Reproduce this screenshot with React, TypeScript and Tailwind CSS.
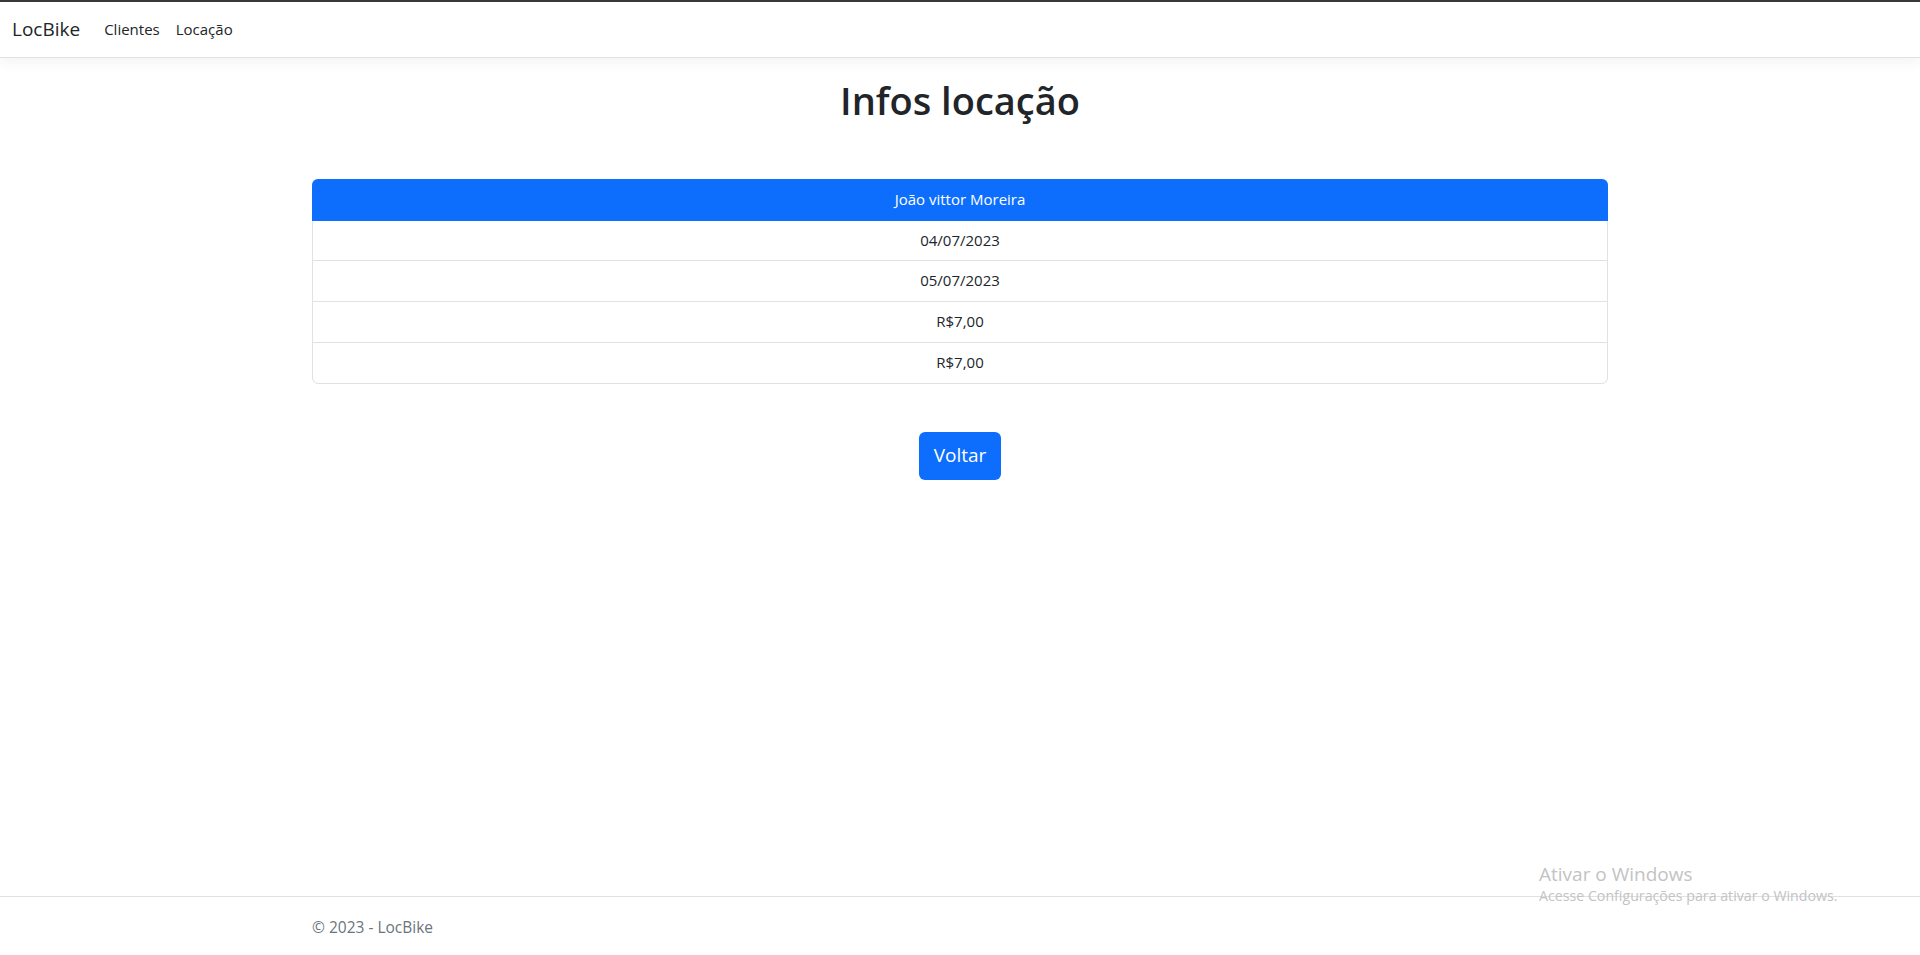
import React from "react";

const font = { fontFamily: '"Open Sans", "Noto Sans", sans-serif' };

export default function App() {
  return (
    <div className="relative min-h-[955px] bg-white text-[#212529]" style={font}>
      <div className="h-[2px] bg-[#3a3a3a]" />
      <nav className="flex items-center h-[56px] px-3 bg-white border-b border-[#dee2e6] shadow-[0_4px_12px_rgba(0,0,0,0.05)]">
        <span className="text-[19px] text-[#212529] mr-4">LocBike</span>
        <a className="text-[15px] text-[#212529] px-2">Clientes</a>
        <a className="text-[15px] text-[#212529] px-2">Locação</a>
      </nav>
      <main className="mx-auto w-[1320px] px-3 pt-[20px]">
        <h1 className="text-center text-[38px] font-semibold leading-[1.2] text-[#212529]">Infos locação</h1>
        <div className="mt-[55px] flex flex-col rounded-md border border-[#dee2e6] text-[15px] text-center">
          <div className="h-[42px] flex items-center justify-center bg-[#0d6efd] text-white rounded-t-md -mx-px -mt-px">João vittor Moreira</div>
          <div className="h-[40px] flex items-center justify-center border-b border-[#dee2e6]">04/07/2023</div>
          <div className="h-[41px] flex items-center justify-center border-b border-[#dee2e6]">05/07/2023</div>
          <div className="h-[41px] flex items-center justify-center border-b border-[#dee2e6]">R$7,00</div>
          <div className="h-[40px] flex items-center justify-center">R$7,00</div>
        </div>
        <div className="flex justify-center mt-[48px]">
          <button className="h-[48px] px-[15px] rounded-[6px] bg-[#0d6efd] text-white text-[19px]">Voltar</button>
        </div>
      </main>
      <footer className="absolute bottom-0 left-0 right-0 h-[59px] border-t border-[#dee2e6]">
        <div className="mx-auto w-[1320px] px-3 leading-[60px] text-[15.5px] text-[#6c757d]">© 2023 - LocBike</div>
      </footer>
      <div className="absolute left-[1539px] top-[862px] text-[#c3c3c3] pointer-events-none">
        <div className="text-[19px] leading-[24px]">Ativar o Windows</div>
        <div className="text-[14.2px] leading-[20px]">Acesse Configurações para ativar o Windows.</div>
      </div>
    </div>
  );
}
